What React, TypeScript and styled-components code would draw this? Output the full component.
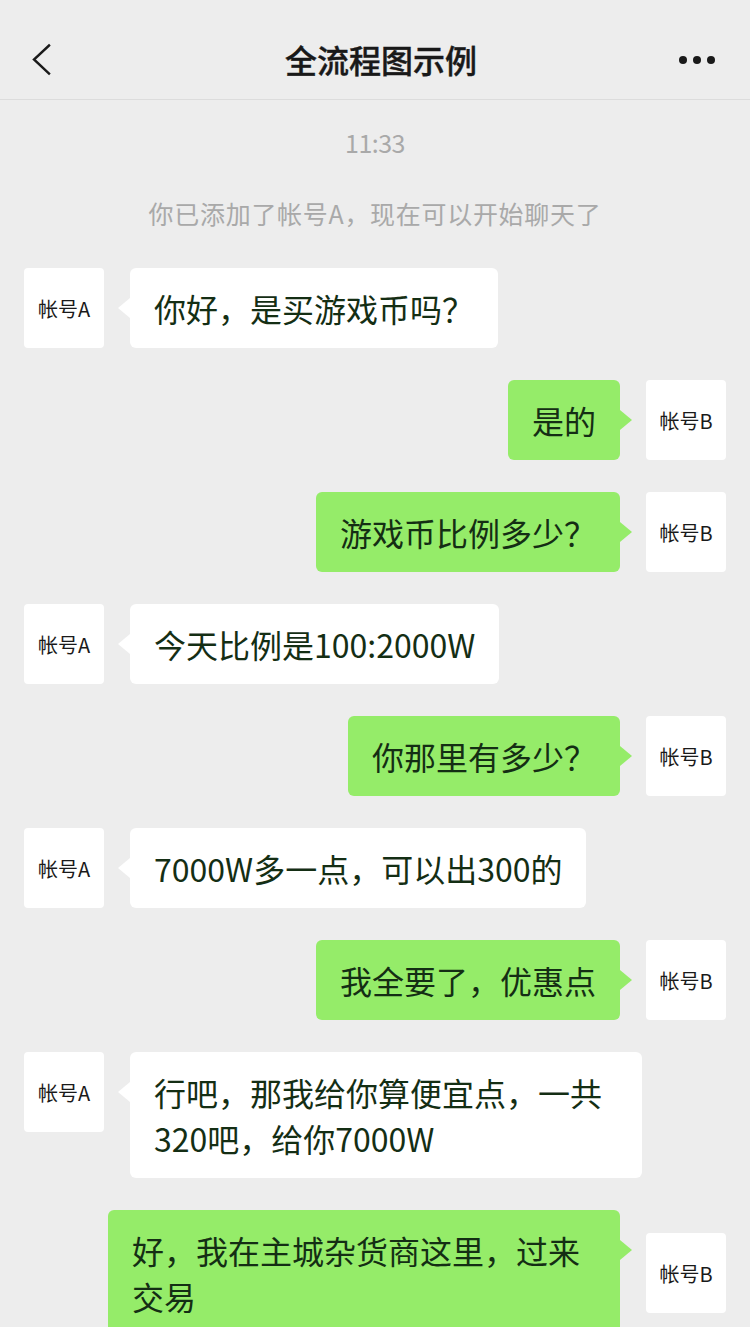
import React from "react";
import styled, { createGlobalStyle, css } from "styled-components";

const GlobalStyle = createGlobalStyle`
  html, body {
    margin: 0;
    padding: 0;
    background: #ededed;
  }
  body {
    font-family: "Noto Sans CJK SC", "Noto Sans", sans-serif;
    -webkit-font-smoothing: antialiased;
  }
  * { box-sizing: border-box; }
`;

const Screen = styled.div`
  width: 750px;
  min-height: 1327px;
  background: #ededed;
  overflow: hidden;
`;

const Header = styled.header`
  height: 100px;
  padding: 20px 24px 0 24px;
  border-bottom: 1px solid #dcdcdc;
  display: grid;
  grid-template-columns: 80px 1fr 80px;
  align-items: center;
`;

const IconButton = styled.button<{ $align: "start" | "end" }>`
  display: flex;
  justify-content: ${(p) => (p.$align === "start" ? "flex-start" : "flex-end")};
  align-items: center;
  background: none;
  border: 0;
  padding: 0 8px;
  height: 60px;
`;

const Title = styled.h1`
  margin: 0;
  text-align: center;
  font-size: 32px;
  font-weight: 500;
  color: #191919;
  line-height: 44px;
  padding: 0 0 2px 12px;
  -webkit-text-stroke: 0.4px #191919;
`;

const Feed = styled.main`
  display: flex;
  flex-direction: column;
  padding: 25px 24px 0 24px;
`;

const Notice = styled.div<{ $kind: "time" | "system" }>`
  text-align: center;
  line-height: 34px;
  font-size: 25px;
  color: #a9a9a9;
  ${(p) =>
    p.$kind === "time"
      ? css`
          letter-spacing: -0.5px;
          margin-bottom: 37px;
        `
      : css`
          letter-spacing: 0.7px;
          margin-bottom: 38px;
        `}
`;

const Messages = styled.div`
  display: flex;
  flex-direction: column;
  gap: 32px;
`;

const Row = styled.div<{ $mine: boolean }>`
  display: flex;
  gap: 26px;
  align-items: ${(p) => (p.$mine ? "center" : "flex-start")};
  justify-content: ${(p) => (p.$mine ? "flex-end" : "flex-start")};
`;

const Avatar = styled.div`
  flex: 0 0 80px;
  width: 80px;
  height: 80px;
  border-radius: 4px;
  background: #ffffff;
  display: flex;
  align-items: center;
  justify-content: center;
  font-size: 20px;
  color: #1a1a1a;
`;

const Bubble = styled.div<{ $mine: boolean }>`
  position: relative;
  max-width: 512px;
  padding: 17px 24px;
  border-radius: 6px;
  font-size: 32px;
  line-height: 46px;
  color: #142e14;
  background: ${(p) => (p.$mine ? "#95ec69" : "#ffffff")};
  word-break: break-all;

  &::before {
    content: "";
    position: absolute;
    top: 30px;
    width: 0;
    height: 0;
    border-top: 10px solid transparent;
    border-bottom: 10px solid transparent;
    ${(p) =>
      p.$mine
        ? css`
            right: -12px;
            border-left: 12px solid #95ec69;
          `
        : css`
            left: -12px;
            border-right: 12px solid #ffffff;
          `}
  }
`;

type Msg = { from: "A" | "B"; text: string };

const messages: Msg[] = [
  { from: "A", text: "你好，是买游戏币吗？" },
  { from: "B", text: "是的" },
  { from: "B", text: "游戏币比例多少？" },
  { from: "A", text: "今天比例是100:2000W" },
  { from: "B", text: "你那里有多少？" },
  { from: "A", text: "7000W多一点，可以出300的" },
  { from: "B", text: "我全要了，优惠点" },
  { from: "A", text: "行吧，那我给你算便宜点，一共320吧，给你7000W" },
  { from: "B", text: "好，我在主城杂货商这里，过来交易" },
];

const BackIcon = () => (
  <svg width="24" height="34" viewBox="0 0 24 34">
    <polyline
      points="17,2.5 2,16.5 17,30.5"
      fill="none"
      stroke="#1a1a1a"
      strokeWidth="2.4"
      strokeLinecap="square"
      strokeLinejoin="miter"
    />
  </svg>
);

const MoreIcon = () => (
  <svg width="40" height="10" viewBox="0 0 40 10">
    <circle cx="5" cy="5" r="4" fill="#1a1a1a" />
    <circle cx="19" cy="5" r="4" fill="#1a1a1a" />
    <circle cx="33" cy="5" r="4" fill="#1a1a1a" />
  </svg>
);

export default function App() {
  return (
    <>
      <GlobalStyle />
      <Screen>
        <Header>
          <IconButton $align="start">
            <BackIcon />
          </IconButton>
          <Title>全流程图示例</Title>
          <IconButton $align="end">
            <MoreIcon />
          </IconButton>
        </Header>
        <Feed>
          <Notice $kind="time">11:33</Notice>
          <Notice $kind="system">你已添加了帐号A，现在可以开始聊天了</Notice>
          <Messages>
            {messages.map((m, i) => {
              const mine = m.from === "B";
              return (
                <Row key={i} $mine={mine}>
                  {!mine && <Avatar>帐号A</Avatar>}
                  <Bubble $mine={mine}>{m.text}</Bubble>
                  {mine && <Avatar>帐号B</Avatar>}
                </Row>
              );
            })}
          </Messages>
        </Feed>
      </Screen>
    </>
  );
}
